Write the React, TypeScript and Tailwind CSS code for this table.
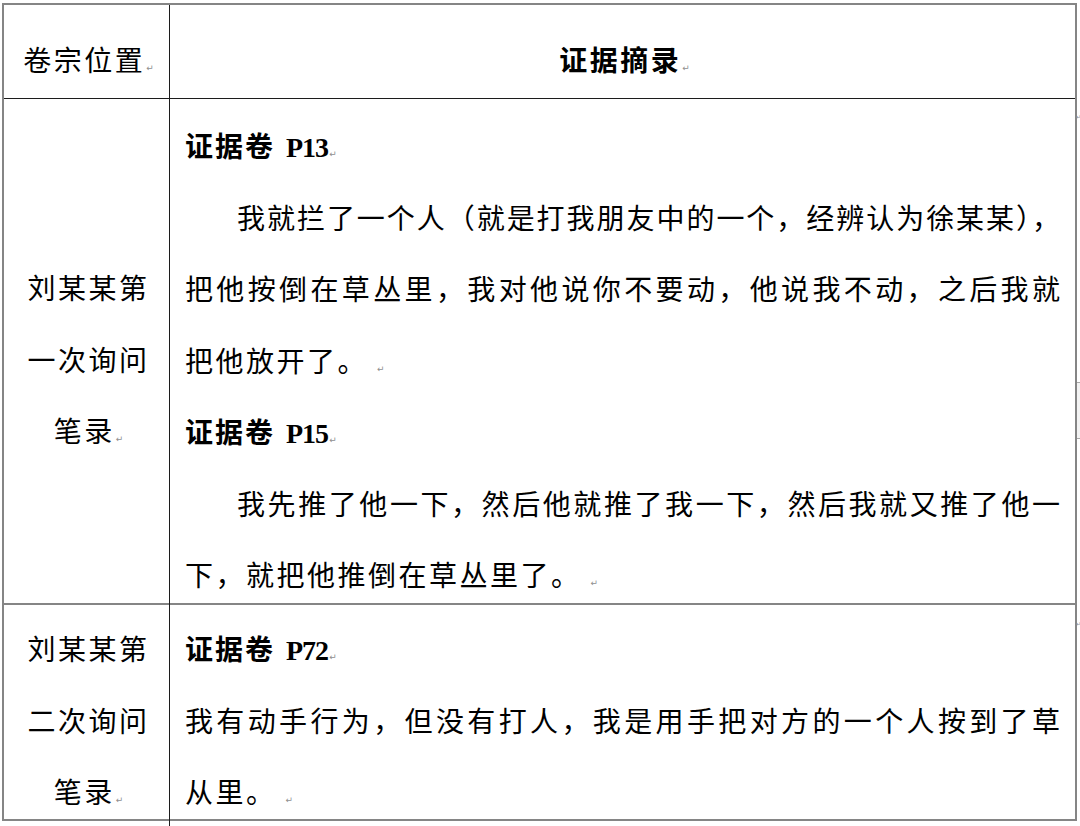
import React from "react";

const PM = () => (
  <span className="inline-block text-[9px] leading-none text-[#8f8f8f] tracking-normal font-['DejaVu_Sans',sans-serif] font-normal ml-[1px] align-baseline">
    ↵
  </span>
);

const Label = ({ code }: { code: string }) => (
  <div className="font-bold whitespace-nowrap">
    <span className="tracking-[2px]">证据卷</span>
    <span className="inline-block w-[11px]" />
    <span className="tracking-[-1px] text-[28px]">{code}</span>
    <PM />
  </div>
);

const JLine = ({ text, indent }: { text: string; indent?: boolean }) => (
  <div
    className={
      indent
        ? "pl-[52px] whitespace-nowrap tracking-[1px] text-justify [text-align-last:justify]"
        : "whitespace-nowrap tracking-[1px] text-justify [text-align-last:justify]"
    }
  >
    {text}
  </div>
);

const Line = ({ text, mark }: { text: string; mark?: boolean }) => (
  <div className="whitespace-nowrap tracking-[2.5px]">
    {text}
    {mark ? (
      <>
        <span className="inline-block w-[8px]" />
        <PM />
      </>
    ) : null}
  </div>
);

export default function App() {
  return (
    <div
      lang="zh-CN"
      className="w-[1080px] h-[826px] bg-white overflow-hidden relative text-black text-[28px] leading-[71.5px] font-['Liberation_Serif','Noto_Sans_CJK_SC',serif]"
    >
      <div className="ml-[2px] mt-[3px] w-[1075px] border-2 border-[#858585]">
        {/* Header */}
        <div className="grid grid-cols-[166px_1fr] h-[94px] border-b border-[#1c1c1c]">
          <div className="border-r border-[#1c1c1c] pt-[21px] text-center tracking-[2.5px] whitespace-nowrap pl-[4px]">
            卷宗位置
            <PM />
          </div>
          <div className="pt-[21px] text-center font-bold tracking-[2.5px] whitespace-nowrap pl-[4px]">
            证据摘录
            <PM />
          </div>
        </div>

        {/* Row 1 */}
        <div className="grid grid-cols-[166px_1fr] h-[506px] border-b-2 border-[#858585]">
          <div className="border-r border-[#1c1c1c] pt-[155px] text-center tracking-[2.5px] pl-[4px]">
            <div>刘某某第</div>
            <div>一次询问</div>
            <div>
              笔录
              <PM />
            </div>
          </div>
          <div className="pt-[13px] pl-[15px] pr-[14px]">
            <Label code="P13" />
            <JLine indent text="我就拦了一个人（就是打我朋友中的一个，经辨认为徐某某），" />
            <JLine text="把他按倒在草丛里，我对他说你不要动，他说我不动，之后我就" />
            <Line text="把他放开了。" mark />
            <Label code="P15" />
            <JLine indent text="我先推了他一下，然后他就推了我一下，然后我就又推了他一" />
            <Line text="下，就把他推倒在草丛里了。" mark />
          </div>
        </div>

        {/* Row 2 */}
        <div className="grid grid-cols-[166px_1fr] h-[214px]">
          <div className="border-r border-[#1c1c1c] pt-[10px] text-center tracking-[2.5px] pl-[4px]">
            <div>刘某某第</div>
            <div>二次询问</div>
            <div>
              笔录
              <PM />
            </div>
          </div>
          <div className="pt-[10px] pl-[15px] pr-[14px]">
            <Label code="P72" />
            <JLine text="我有动手行为，但没有打人，我是用手把对方的一个人按到了草" />
            <Line text="从里。" mark />
          </div>
        </div>
      </div>

      {/* right-edge end-of-row marks */}
      <span className="absolute left-[1076px] top-[114px] text-[6px] leading-none text-[#8f8f8f] font-['DejaVu_Sans',sans-serif]">
        ↵
      </span>
      <span className="absolute left-[1076px] top-[621px] text-[6px] leading-none text-[#8f8f8f] font-['DejaVu_Sans',sans-serif]">
        ↵
      </span>
      <div className="absolute left-[1077px] top-[382px] w-[3px] h-[57px] border-y border-[#a8a8a8] bg-[#f3f3f3]" />
    </div>
  );
}
